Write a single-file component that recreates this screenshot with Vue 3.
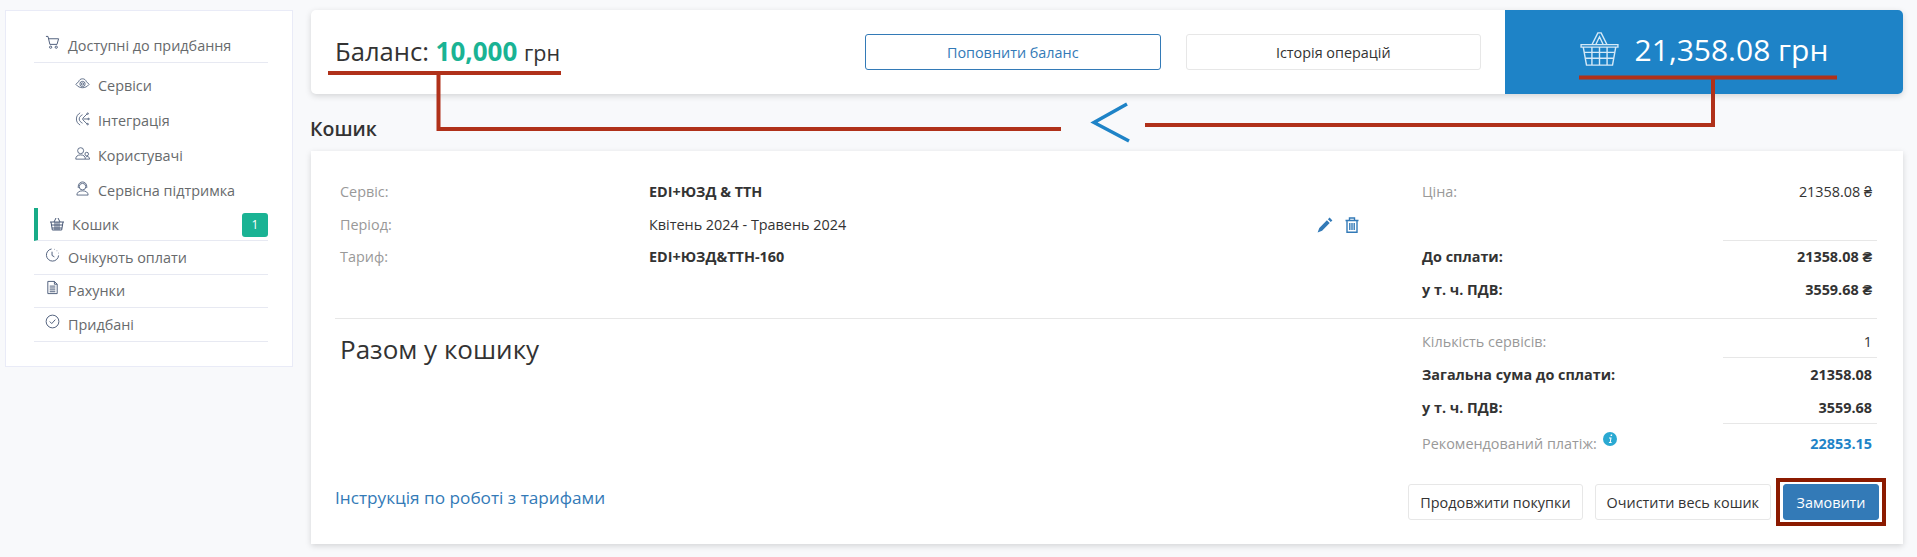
<script setup>
const subItems = [
  { title: 'Сервіси', icon: 'eye' },
  { title: 'Інтеграція', icon: 'fan' },
  { title: 'Користувачі', icon: 'users' },
  { title: 'Сервісна підтримка', icon: 'support' }
];

const lineItems = [
  { label: 'Сервіс:', value: 'EDI+ЮЗД & ТТН', bold: true },
  { label: 'Період:', value: 'Квітень 2024 - Травень 2024', bold: false },
  { label: 'Тариф:', value: 'EDI+ЮЗД&ТТН-160', bold: true }
];
</script>

<template>
  <div class="page">
    <aside class="sidebar">
      <div class="menu-item first">
        <svg class="menu-icon" viewBox="0 0 16 16" fill="none" stroke="#4a5a78" stroke-width="1">
          <path d="M1 1.500h2.200l2 8.500h7.600l1.700-6H3.800" />
          <circle cx="6" cy="13" r="1.200" />
          <circle cx="12" cy="13" r="1.200" />
        </svg>
        <span>Доступні до придбання</span>
      </div>
      <div v-for="item in subItems" :key="item.title" class="sub-item">
        <svg class="sub-icon" viewBox="0 0 16 16" fill="none" stroke="#4a5a78" stroke-width="0.9">
          <template v-if="item.icon === 'eye'">
            <path d="M1 9c1-1.500 2-2.500 3-3 .5-2 2-3 4-3s3.500 1 4 3c1 .5 2 1.500 3 3-2 2.500-4.500 3.500-7 3.500S3 11.500 1 9z" />
            <circle cx="8" cy="8.500" r="2.800" />
            <circle cx="8" cy="8.500" r="1.200" />
          </template>
          <template v-else-if="item.icon === 'fan'">
            <path d="M8 8l5-5M8 8.500h6.500M8 9l5 5M5.500 2C3 3.500 1.500 5.500 1.500 8.500S3 13.500 5.500 15M8 4C6 5 4.500 6.500 4.500 8.500S6 12 8 13" />
            <circle cx="13.500" cy="2.800" r=".8" />
            <circle cx="14.500" cy="8.500" r=".8" />
            <circle cx="13.500" cy="14" r=".8" />
          </template>
          <template v-else-if="item.icon === 'users'">
            <circle cx="6" cy="5" r="3.200" />
            <path d="M.8 14c0-3 2-4.500 5.200-4.500S11 11 11 14zM12.500 10.500a1.900 1.900 0 1 0 0-3.800 1.900 1.900 0 0 0 0 3.800zM11.500 12c.5-.6 1-.8 1.500-.8 1.500 0 2.500 1 2.500 2.800H11" />
          </template>
          <template v-else>
            <circle cx="8" cy="6" r="3.500" />
            <path d="M3.500 7.500V5.500a4.500 4.500 0 0 1 9 0v2M2 15c0-3 2.500-4.500 6-4.500s6 1.500 6 4.500z" />
          </template>
        </svg>
        <span>{{ item.title }}</span>
      </div>
      <div class="menu-item active">
        <svg class="basket-small" viewBox="0 0 16 16" fill="none" stroke="#4a5a78" stroke-width="1">
          <path d="M5 6l2-4M11 6L9 2M1 6h14M2 6l1.300 8h9.400L14 6M2.500 9h11M3 12h10M6 6v8M8 6v8M10 6v8" />
        </svg>
        <span>Кошик</span>
        <span class="badge">1</span>
      </div>
      <div class="menu-item">
        <svg class="menu-icon" viewBox="0 0 16 16" fill="none" stroke="#4a5a78" stroke-width="1">
          <path d="M14.500 9A6.500 6.500 0 1 1 7 2.100M7.500 5v4l2.500 1.500" />
          <path d="M10 2.500h.5M12.500 4h.5M14 6.500h.5" />
        </svg>
        <span>Очікують оплати</span>
      </div>
      <div class="menu-item">
        <svg class="menu-icon" viewBox="0 0 16 16" fill="none" stroke="#4a5a78" stroke-width="1">
          <path d="M3 1.500h7l3 3v10H3zM10 1.500v3h3M5 6.500h6M5 8.500h6M5 10.500h6M5 12.500h6" />
        </svg>
        <span>Рахунки</span>
      </div>
      <div class="menu-item">
        <svg class="menu-icon" viewBox="0 0 16 16" fill="none" stroke="#4a5a78" stroke-width="1">
          <circle cx="8" cy="8" r="6.800" />
          <path d="M5 8l2.200 2.200L11 6" />
        </svg>
        <span>Придбані</span>
      </div>
    </aside>

    <main class="content">
      <section class="balance-bar">
        <div class="balance">Баланс: <b>10,000</b> <small>грн</small></div>
        <div class="balance-actions">
          <button class="btn btn-outline">Поповнити баланс</button>
          <button class="btn">Історія операцій</button>
        </div>
        <div class="total">
          <svg class="total-icon" viewBox="0 0 36 36" preserveAspectRatio="none" fill="none" stroke="#d5e9f7" stroke-width="1.300">
            <path d="M11 13L16.500 1h3L25 13M14.500 13L18 5l3.500 8M1 13h34v2.500H1zM3 15.500L6 34h24l3-18.500M4 21h28M5 27h26M11 15.500V34M18 15.500V34M25 15.500V34" />
          </svg>
          <span>21,358.08 грн</span>
        </div>
      </section>

      <h2 class="title">Кошик</h2>

      <section class="cart">
        <div class="cart-top">
          <div class="lines">
            <div v-for="line in lineItems" :key="line.label" class="line">
              <span class="muted">{{ line.label }}</span>
              <span :class="{ strong: line.bold }">{{ line.value }}</span>
            </div>
          </div>
          <div class="line-actions">
            <svg class="pencil" viewBox="0 0 16 16" fill="#337ab7">
              <path d="M12.600.6l2.800 2.800-1.700 1.700-2.800-2.800zM9.900 3.300l2.800 2.800-7.600 7.600L.6 15.400l1.700-4.500z" />
            </svg>
            <svg class="trash" viewBox="0 0 14 16" fill="none" stroke="#337ab7" stroke-width="1.400">
              <path d="M.5 3.500h13M4.500 3.500V1h5v2.500M2 3.500v11.800h10V3.500M4.800 6v7M7 6v7M9.200 6v7" />
            </svg>
          </div>
          <div class="prices">
            <div class="price price-first"><span class="muted">Ціна:</span><span>21358.08 ₴</span></div>
            <div class="price strong ruled"><span>До сплати:</span><span>21358.08 ₴</span></div>
            <div class="price strong"><span>у т. ч. ПДВ:</span><span>3559.68 ₴</span></div>
          </div>
        </div>

        <div class="cart-bottom">
          <h3>Разом у кошику</h3>
          <div class="summary">
            <div class="price count"><span class="muted">Кількість сервісів:</span><span>1</span></div>
            <div class="price strong ruled"><span>Загальна сума до сплати:</span><span>21358.08</span></div>
            <div class="price strong"><span>у т. ч. ПДВ:</span><span>3559.68</span></div>
            <div class="price ruled recommended">
              <span class="muted rec">
                <span>Рекомендований платіж:</span>
                <svg class="info" viewBox="0 0 14 14">
                  <circle cx="7" cy="7" r="7" fill="#2aa9d2" />
                  <path d="M7.800 2.500h1.500l-.3 1.500H7.500zM6 5.500h2.600L7.800 10h.9l-.2 1H5.800l.2-1h.8l.5-3.500H6z" fill="#fff" />
                </svg>
              </span>
              <span class="link-value">22853.15</span>
            </div>
          </div>
        </div>

        <div class="cart-footer">
          <a class="manual">Інструкція по роботі з тарифами</a>
          <div class="footer-actions">
            <button class="btn">Продовжити покупки</button>
            <button class="btn">Очистити весь кошик</button>
            <span class="order-frame"><button class="btn btn-primary">Замовити</button></span>
          </div>
        </div>
      </section>
    </main>

    <!-- annotation drawn over the screenshot -->
    <svg class="annotation" width="1917" height="557" fill="none">
      <g stroke="#b0311a" stroke-width="4">
        <path d="M328 73H561M438.500 73V129H1061" />
        <path d="M1579 77.500H1837M1713 77.500V125H1145" />
      </g>
      <path d="M1127 104L1094 122.500L1129 141" stroke="#1e83c7" stroke-width="3.500" />
    </svg>
  </div>
</template>

<style scoped>
.page {
  position: relative;
  display: flex;
  align-items: flex-start;
  box-sizing: border-box;
  height: 557px;
  padding: 10px 14px 0 5px;
  background: #f8f9fb;
  font-family: "Open Sans", sans-serif;
  font-size: 14.400px;
  color: #333;
  overflow: hidden;
}

.annotation {
  position: absolute;
  left: 0;
  top: 0;
  pointer-events: none;
}

.sidebar {
  box-sizing: border-box;
  flex: 0 0 288px;
  height: 357px;
  padding: 18px 24px 0 28px;
  background: #fff;
  border: 1px solid #e9ebf7;
  color: #676a6c;
}

.menu-item {
  box-sizing: border-box;
  display: flex;
  align-items: center;
  height: 33.670px;
  border-bottom: 1px solid #e7e9f2;
}

.menu-item.first {
  height: 34px;
}

.menu-icon {
  width: 15px;
  height: 15px;
  margin: -6px 8px 0 11px;
  flex: none;
}

.sub-item {
  display: flex;
  align-items: center;
  height: 35px;
  padding-left: 41px;
}

.menu-item.first + .sub-item {
  margin-top: 4.500px;
}

.sub-icon {
  width: 15px;
  height: 15px;
  margin: -4px 8px 0 0;
  flex: none;
}

.menu-item.active {
  height: 33px;
  margin-top: .5px;
  border-left: 4px solid #17ab87;
}

.basket-small {
  width: 16px;
  height: 16px;
  margin: 0 7px 0 11px;
  flex: none;
}

.badge {
  margin-left: auto;
  margin-top: 1px;
  width: 26px;
  height: 24px;
  line-height: 24px;
  text-align: center;
  border-radius: 3px;
  background: #1ab394;
  color: #fff;
  font-size: 12px;
}

.content {
  flex: 1;
  margin-left: 18px;
  min-width: 0;
}

.balance-bar {
  display: flex;
  align-items: stretch;
  height: 84px;
  background: #fff;
  border-radius: 5px;
  box-shadow: 0 2px 6px rgba(0, 0, 0, 0.15);
}

.balance {
  flex: 0 0 554px;
  padding: 25px 0 0 24px;
  box-sizing: border-box;
  font-size: 25.600px;
  line-height: 32px;
  color: #333;
}

.balance b {
  color: #1ab394;
  font-size: 26px;
}

.balance small {
  font-size: 21.500px;
}

.balance-actions {
  display: flex;
  align-items: center;
  gap: 25px;
  flex: 0 0 616px;
  margin-right: 24px;
}

.balance-actions .btn {
  flex: 1;
}

.btn {
  box-sizing: border-box;
  height: 36px;
  padding: 0 11px;
  border: 1px solid #e7e7e7;
  border-radius: 3px;
  background: #fff;
  color: #333;
  font-family: inherit;
  font-size: 14.400px;
  white-space: nowrap;
}

.btn-outline {
  border-color: #337ab7;
  color: #337ab7;
}

.btn-primary {
  padding: 0 12.500px;
  background: #337ab7;
  border-color: #337ab7;
  color: #fff;
}

.total {
  display: flex;
  align-items: center;
  justify-content: center;
  flex: 1;
  gap: 16px;
  padding-bottom: 6px;
  background: #1e83c7;
  border-radius: 0 5px 5px 0;
  color: #fff;
  font-size: 30px;
  white-space: nowrap;
}

.total-icon {
  width: 39px;
  height: 35px;
}

.title {
  margin: 23px 0 10px -1px;
  font-size: 19.500px;
  font-weight: 600;
  line-height: 24px;
  color: #333;
}

.cart {
  box-sizing: border-box;
  height: 393px;
  padding: 31px 26px 0 24px;
  background: #fff;
  box-shadow: 0 2px 6px rgba(0, 0, 0, 0.15);
}

.cart-top {
  display: flex;
  box-sizing: border-box;
  height: 137px;
  border-bottom: 1px solid #e7e7e7;
}

.lines {
  flex: 0 0 982px;
  padding-left: 5px;
  box-sizing: border-box;
}

.line {
  display: flex;
  height: 32.500px;
  line-height: 20px;
}

.line span:first-child {
  width: 309px;
}

.muted {
  color: #999;
}

.strong {
  font-weight: 700;
}

.line-actions {
  display: flex;
  gap: 12px;
  height: 16px;
  margin-top: 35px;
}

.pencil {
  width: 16px;
  height: 16px;
}

.trash {
  width: 14px;
  height: 16px;
}

.prices {
  flex: 0 0 460px;
  margin-left: auto;
}

.price {
  position: relative;
  display: flex;
  justify-content: space-between;
  align-items: center;
  box-sizing: border-box;
  height: 33px;
  padding: 0 5px;
  white-space: nowrap;
}

.price-first {
  height: 58px;
  align-items: flex-start;
  line-height: 20px;
}

.ruled::before {
  content: '';
  position: absolute;
  top: 0;
  right: 0;
  width: 154px;
  height: 1px;
  background: #e7e7e7;
}

.cart-bottom {
  display: flex;
  justify-content: space-between;
}

.cart-bottom h3 {
  margin: 14px 0 0 5px;
  font-size: 26px;
  font-weight: 400;
  line-height: 32px;
}

.summary {
  width: 460px;
  padding-top: 7px;
}

.summary .strong {
  padding-top: 2px;
}

.count {
  height: 31px;
}

.recommended {
  height: 40px;
}

.rec {
  display: flex;
  align-items: flex-start;
  gap: 6px;
}

.info {
  width: 14px;
  height: 14px;
  margin-top: -2px;
}

.link-value {
  color: #1e83c7;
  font-weight: 700;
}

.cart-footer {
  display: flex;
  justify-content: space-between;
  align-items: center;
  margin-top: 21px;
}

.manual {
  font-size: 17.200px;
  color: #337ab7;
  margin-top: -10px;
}

.footer-actions {
  display: flex;
  align-items: center;
  gap: 12px;
  margin-right: -2px;
}

.order-frame {
  display: block;
  padding: 2px 3px;
  margin: -6px -7px;
  background: #fff;
  border: 4px solid #8b1a00;
}

.order-frame .btn {
  display: block;
}
</style>

<style>
body {
  margin: 0;
}
</style>
